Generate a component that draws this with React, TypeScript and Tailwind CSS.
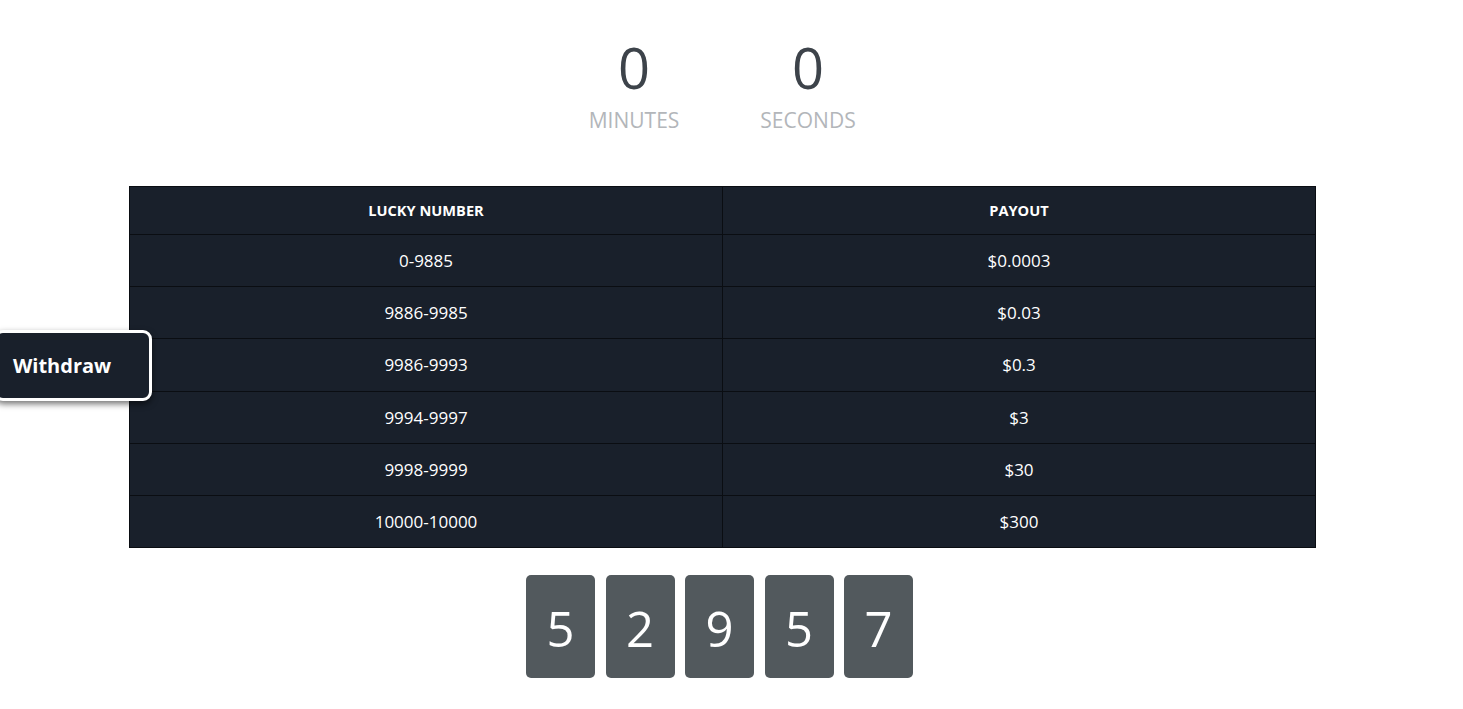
import React from "react";

const rows: [string, string, string][] = [
  ["0-9885", "$0.0003", "h-[52px]"],
  ["9886-9985", "$0.03", "h-[52px]"],
  ["9986-9993", "$0.3", "h-[53px]"],
  ["9994-9997", "$3", "h-[52px]"],
  ["9998-9999", "$30", "h-[52px]"],
  ["10000-10000", "$300", "h-[52px]"],
];

const digits = ["5", "2", "9", "5", "7"];

export default function App() {
  return (
    <div
      className="relative min-h-[709px] w-full bg-white"
      style={{ fontFamily: '"Open Sans", "Noto Sans", sans-serif' }}
    >
      <div className="flex w-[1445px] flex-col items-center pt-[29px]">
        <div className="mr-[3px] flex gap-[80px]">
          <div className="flex w-[94px] flex-col items-center">
            <div className="text-[56px] leading-[76px] text-[#3d434a]">0</div>
            <div className="mt-[1px] text-[21px] leading-[28px] text-[#b3b6ba]">MINUTES</div>
          </div>
          <div className="flex w-[94px] flex-col items-center">
            <div className="text-[56px] leading-[76px] text-[#3d434a]">0</div>
            <div className="mt-[1px] text-[21px] leading-[28px] text-[#b3b6ba]">SECONDS</div>
          </div>
        </div>

        <table className="mt-[52px] w-[1187px] border-collapse bg-[#19202b] text-white">
          <thead>
            <tr className="h-[48px]">
              <th className="w-1/2 border border-[#0a0d12] text-[14.6px] font-bold">LUCKY NUMBER</th>
              <th className="w-1/2 border border-[#0a0d12] text-[14.6px] font-bold">PAYOUT</th>
            </tr>
          </thead>
          <tbody>
            {rows.map(([a, b, h]) => (
              <tr key={a} className={h}>
                <td className="border border-[#0a0d12] text-center text-[17px]">{a}</td>
                <td className="border border-[#0a0d12] text-center text-[17px]">{b}</td>
              </tr>
            ))}
          </tbody>
        </table>

        <div className="mr-[6px] mt-[27px] flex gap-[10.5px]">
          {digits.map((d, i) => (
            <div
              key={i}
              className="flex h-[103px] w-[69px] items-center justify-center rounded-[5px] bg-[#52595d] pt-[5px] text-[49px] text-white"
            >
              {d}
            </div>
          ))}
        </div>
      </div>

      <div className="absolute left-[-6px] top-[330px] flex h-[71px] w-[158px] items-center rounded-[9px] border-[3px] border-white bg-[#19202b] pl-[16px] text-[20px] font-bold text-white shadow-[0_3px_6px_rgba(0,0,0,0.55)]">
        Withdraw
      </div>
    </div>
  );
}
